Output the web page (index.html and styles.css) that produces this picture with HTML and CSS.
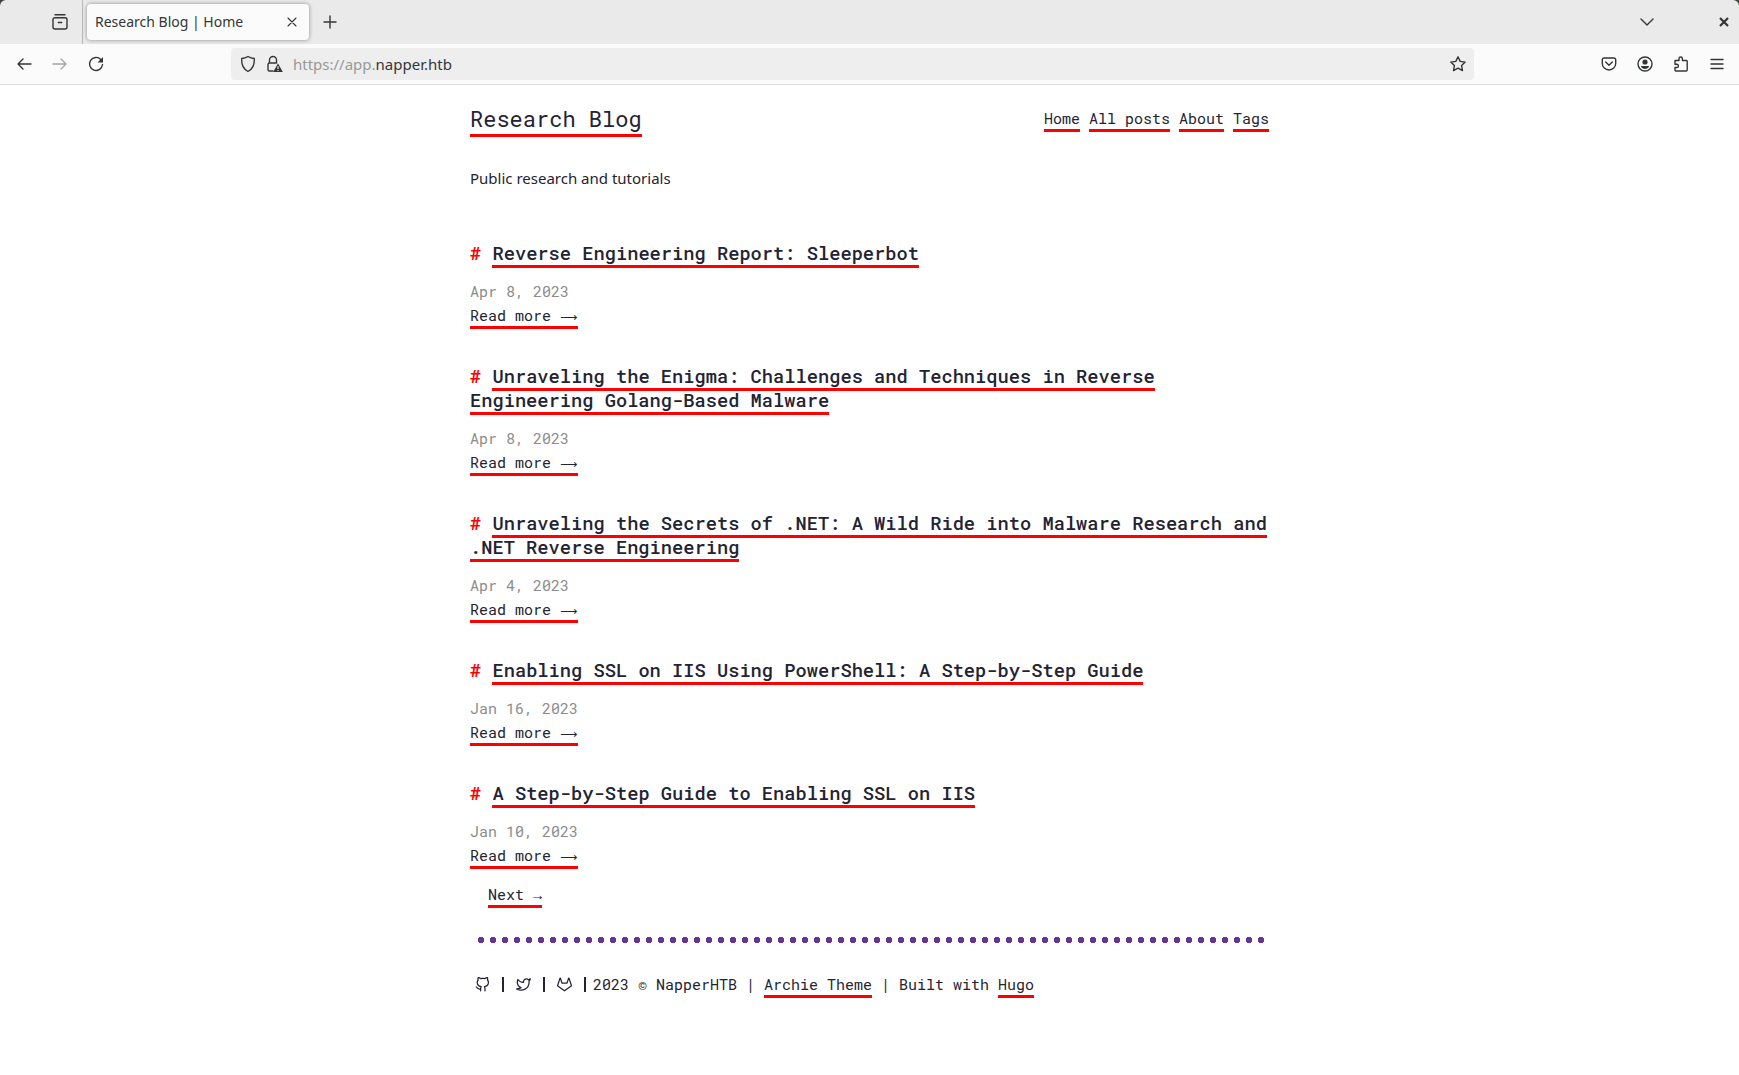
FILE: index.html
```html
<!DOCTYPE html>
<html lang="en">
<head>
<meta charset="utf-8">
<title>Research Blog | Home</title>
<link rel="stylesheet" href="styles.css">
</head>
<body>
<div class="browser">
  <div class="tabbar">
    <button class="icon-btn recent" aria-label="Recent browsing"><svg width="18" height="18" viewBox="0 0 18 18"><path d="M4 1.700h10M4 4.700h10a2 2 0 0 1 2 2v7.300a2 2 0 0 1-2 2H4a2 2 0 0 1-2-2V6.700a2 2 0 0 1 2-2zM7.300 9.500h3.400"/></svg></button>
    <div class="tab">
      <span class="tab-title">Research Blog | Home</span>
      <button class="icon-btn" aria-label="Close tab"><svg width="10" height="10" viewBox="0 0 10 10"><path class="thin" d="M1 1l8 8M9 1l-8 8"/></svg></button>
    </div>
    <button class="icon-btn new-tab" aria-label="New tab"><svg width="14" height="14" viewBox="0 0 14 14"><path d="M7 1v12M1 7h12"/></svg></button>
    <button class="icon-btn list-tabs" aria-label="List all tabs"><svg width="14" height="10" viewBox="0 0 14 10"><path d="M1 2l6 6 6-6"/></svg></button>
    <button class="icon-btn close-window" aria-label="Close window"><svg width="10" height="10" viewBox="0 0 10 10"><path class="bold" d="M1 1l8 8M9 1l-8 8"/></svg></button>
  </div>
  <div class="toolbar">
    <div class="nav-buttons">
      <button class="icon-btn" aria-label="Back"><svg width="16" height="16" viewBox="0 0 16 16"><path d="M15 8H2M7 3L2 8l5 5"/></svg></button>
      <button class="icon-btn" aria-label="Forward" disabled><svg width="16" height="16" viewBox="0 0 16 16"><path d="M1 8h13M9 3l5 5-5 5"/></svg></button>
      <button class="icon-btn" aria-label="Reload"><svg width="16" height="16" viewBox="0 0 16 16"><path d="M12.800 3.500A6.500 6.500 0 1 0 14.500 8.500"/><path class="fill" d="M15 1v5.500H9.500z"/></svg></button>
    </div>
    <div class="urlbar">
      <svg width="16" height="18" viewBox="0 0 16 18"><path d="M8 1.500c2 1.300 4 1.900 6.300 2C14.700 9.500 12.500 14 8 16.500 3.500 14 1.300 9.500 1.700 3.500 4 3.400 6 2.800 8 1.500z"/></svg>
      <svg width="17" height="18" viewBox="0 0 17 18"><path d="M7 16H3.500a1.500 1.500 0 0 1-1.500-1.500v-5A1.500 1.500 0 0 1 3.500 8h7M3.500 8V5a3.500 3.500 0 0 1 7 0v3"/><path class="fill" d="M12 8.500L16.800 17H7.200z"/><path class="mark" d="M12 11.200v2.800M12 15v1"/></svg>
      <span class="url"><span class="dim">https://app.</span>napper.htb</span>
      <svg width="18" height="18" viewBox="0 0 18 18"><path d="M9 1.800l2.200 4.600 5 .7-3.600 3.500.9 5L9 13.200l-4.500 2.400.9-5L1.800 7.100l5-.7z"/></svg>
    </div>
    <div class="tools">
      <button class="icon-btn" aria-label="Save to Pocket"><svg width="16" height="16" viewBox="0 0 16 16"><path d="M3 2h10a1.700 1.700 0 0 1 1.700 1.700V7.500a6.700 6.500 0 0 1-13.400 0V3.700A1.700 1.700 0 0 1 3 2zM4.700 6L8 9.200 11.300 6"/></svg></button>
      <button class="icon-btn" aria-label="Account"><svg width="16" height="16" viewBox="0 0 16 16"><circle cx="8" cy="8" r="7"/><circle class="fill" cx="8" cy="6" r="2.600"/><path class="fill" d="M4 10h8c0 1.800-1.800 2.900-4 2.900S4 11.800 4 10z"/></svg></button>
      <button class="icon-btn" aria-label="Extensions"><svg width="16" height="16" viewBox="0 0 16 16"><path d="M2 4.500h4V2.700a1.700 1.700 0 0 1 3.400 0v1.800h4a.8.8 0 0 1 .8.800V14a1 1 0 0 1-1 1H3a1 1 0 0 1-1-1v-2.500h1.800a1.600 1.600 0 0 0 0-3.200H2z"/></svg></button>
      <button class="icon-btn" aria-label="Menu"><svg width="14" height="14" viewBox="0 0 14 14"><path d="M1 2.500h12M1 7h12M1 11.500h12"/></svg></button>
    </div>
  </div>
</div>

<div class="content">
  <header class="site-header">
    <div class="site-title"><a href="#">Research Blog</a></div>
    <nav class="site-nav">
      <a href="#">Home</a>
      <a href="#">All posts</a>
      <a href="#">About</a>
      <a href="#">Tags</a>
    </nav>
  </header>
  <main>
    <p class="description">Public research and tutorials</p>
    <article class="post">
      <h3><span class="hash">#</span> <a href="#">Reverse Engineering Report: Sleeperbot</a></h3>
      <time>Apr 8, 2023</time>
      <div class="more"><a href="#">Read more <span class="arrow">⟶</span></a></div>
    </article>
    <article class="post">
      <h3><span class="hash">#</span> <a href="#">Unraveling the Enigma: Challenges and Techniques in Reverse Engineering Golang-Based Malware</a></h3>
      <time>Apr 8, 2023</time>
      <div class="more"><a href="#">Read more <span class="arrow">⟶</span></a></div>
    </article>
    <article class="post">
      <h3><span class="hash">#</span> <a href="#">Unraveling the Secrets of .NET: A Wild Ride into Malware Research and .NET Reverse Engineering</a></h3>
      <time>Apr 4, 2023</time>
      <div class="more"><a href="#">Read more <span class="arrow">⟶</span></a></div>
    </article>
    <article class="post">
      <h3><span class="hash">#</span> <a href="#">Enabling SSL on IIS Using PowerShell: A Step-by-Step Guide</a></h3>
      <time>Jan 16, 2023</time>
      <div class="more"><a href="#">Read more <span class="arrow">⟶</span></a></div>
    </article>
    <article class="post">
      <h3><span class="hash">#</span> <a href="#">A Step-by-Step Guide to Enabling SSL on IIS</a></h3>
      <time>Jan 10, 2023</time>
      <div class="more"><a href="#">Read more <span class="arrow">⟶</span></a></div>
    </article>
    <div class="pagination"><a href="#">Next →</a></div>
  </main>
  <footer>
    <hr>
    <div class="footer-row">
      <div class="social">
        <a href="#" aria-label="GitHub"><svg width="15" height="15" viewBox="0 0 24 24"><path d="M9 19c-5 1.500-5-2.500-7-3m14 6v-3.870a3.370 3.370 0 0 0-.94-2.610c3.140-.35 6.440-1.540 6.440-7A5.440 5.440 0 0 0 20 4.770 5.070 5.070 0 0 0 19.910 1S18.730.65 16 2.480a13.380 13.380 0 0 0-7 0C6.270.65 5.090 1 5.090 1A5.070 5.070 0 0 0 5 4.770a5.440 5.440 0 0 0-1.500 3.780c0 5.420 3.300 6.610 6.440 7A3.370 3.370 0 0 0 9 18.130V22"/></svg></a>
        <span class="bar"></span>
        <a href="#" aria-label="Twitter"><svg width="15" height="15" viewBox="0 0 24 24"><path d="M23 3a10.900 10.900 0 0 1-3.140 1.530 4.480 4.480 0 0 0-7.860 3v1A10.660 10.660 0 0 1 3 4s-4 9 5 13a11.640 11.640 0 0 1-7 2c9 5 20 0 20-11.500a4.500 4.500 0 0 0-.08-.83A7.720 7.720 0 0 0 23 3z"/></svg></a>
        <span class="bar"></span>
        <a href="#" aria-label="GitLab"><svg width="15" height="15" viewBox="0 0 24 24"><path d="M22.650 14.390L12 22.130 1.350 14.390a.84.84 0 0 1-.3-.94l1.220-3.780 2.440-7.510A.42.42 0 0 1 4.820 2a.43.43 0 0 1 .58 0 .42.42 0 0 1 .11.180l2.440 7.490h8.100l2.440-7.510A.42.42 0 0 1 18.600 2a.43.43 0 0 1 .58 0 .42.42 0 0 1 .11.180l2.440 7.510L23 13.450a.84.84 0 0 1-.35.940z"/></svg></a>
        <span class="bar"></span>
      </div>
      <div>2023 © NapperHTB | <a href="#">Archie Theme</a> | Built with <a href="#">Hugo</a></div>
    </div>
  </footer>
</div>
</body>
</html>
```
FILE: styles.css
```css
* { box-sizing: border-box; }
body {
  margin: 0;
  background: #fff;
  color: #232333;
  font-family: "Roboto Mono", "Liberation Mono", monospace;
  font-size: 16px;
  line-height: 24px;
}
svg { display: block; fill: none; stroke: currentColor; stroke-width: 1.4; stroke-linecap: round; stroke-linejoin: round; }
svg .fill { fill: currentColor; stroke: none; }
svg .thin { stroke-width: 1.1; }
svg .bold { stroke-width: 2.2; stroke-linecap: butt; }
svg .mark { stroke: #eee; stroke-width: 1.2; stroke-linecap: butt; }

.browser { background: #3c463c; font-family: "Noto Sans", sans-serif; font-size: 15px; color: #333637; }
.icon-btn { display: flex; align-items: center; justify-content: center; width: 36px; height: 32px; padding: 0; border: 0; background: none; color: inherit; }
.icon-btn:disabled { color: #a5a5a5; }
.tabbar { display: flex; align-items: center; height: 44px; border-radius: 6px 6px 0 0; background: #eaeaea; }
.recent { width: 83px; height: 44px; padding-left: 38px; border-right: 1px solid #b8b8b8; }
.tab { display: flex; align-items: center; justify-content: space-between; width: 222px; height: 36px; margin-left: 4px; padding-left: 8px; border-radius: 4px; background: #fbfbfb; box-shadow: 0 0 4px rgba(0, 0, 0, .4); }
.tab-title { font-size: 14px; }
.tab .icon-btn { width: 34px; }
.new-tab { margin-left: 3px; }
.list-tabs { margin-left: auto; }
.close-window { margin-left: 44px; width: 30px; }

.toolbar { display: flex; align-items: center; justify-content: space-between; height: 41px; background: #fbfbfb; border-bottom: 1px solid #dcdcdc; padding: 0 4px 0 6px; }
.nav-buttons { display: flex; flex: 0 1 225px; }
.tools { display: flex; justify-content: flex-end; flex: 1 0 150px; }
.urlbar { display: flex; align-items: center; gap: 10px; flex: 0 1 1243px; height: 32px; padding: 0 7px 0 9px; border-radius: 4px; background: #eee; }
.url { flex: 1; }
.dim { color: #999; }

.content { max-width: 799px; margin: 0 auto; padding-bottom: 40px; }
.content a { padding-bottom: 1px; color: inherit; text-decoration: none; border-bottom: 3px solid red; }
.site-header { display: flex; justify-content: space-between; align-items: center; padding-top: 21px; }
.site-title { font-size: 22px; }
.site-nav { display: flex; gap: 9px; padding-top: 2px; font-size: 15px; line-height: 20px; }
.description { margin: 34px 0 51px; font-family: "Noto Sans", sans-serif; font-size: 15px; }
.post { margin-bottom: 37px; }
.post:last-of-type { margin-bottom: 15px; }
.post h3 { margin: 0 0 14px; font-weight: 500; }
.post h3 a { padding-bottom: 0; }
.hash { color: red; font-weight: 700; }
.post time { display: block; font-size: 15px; color: #8c8c8c; }
.more { font-size: 15px; }
.arrow { display: inline-block; width: 18px; font-family: "DejaVu Sans", sans-serif; font-size: 12px; line-height: 12px; }
.pagination { padding-left: 18px; font-size: 15px; }
hr { height: 6px; margin: 31px 5px 29px; border: 0; background: radial-gradient(circle at center, #639 3px, transparent 3px) left / 12px 6px repeat-x; }
.footer-row { display: flex; gap: 7px; font-size: 15px; }
.social { display: flex; align-items: center; gap: 12px; padding-left: 5px; }
.social a { padding: 0; border: 0; }
.social svg { stroke-width: 2; }
.bar { width: 2px; height: 15px; background: #232333; }
```
